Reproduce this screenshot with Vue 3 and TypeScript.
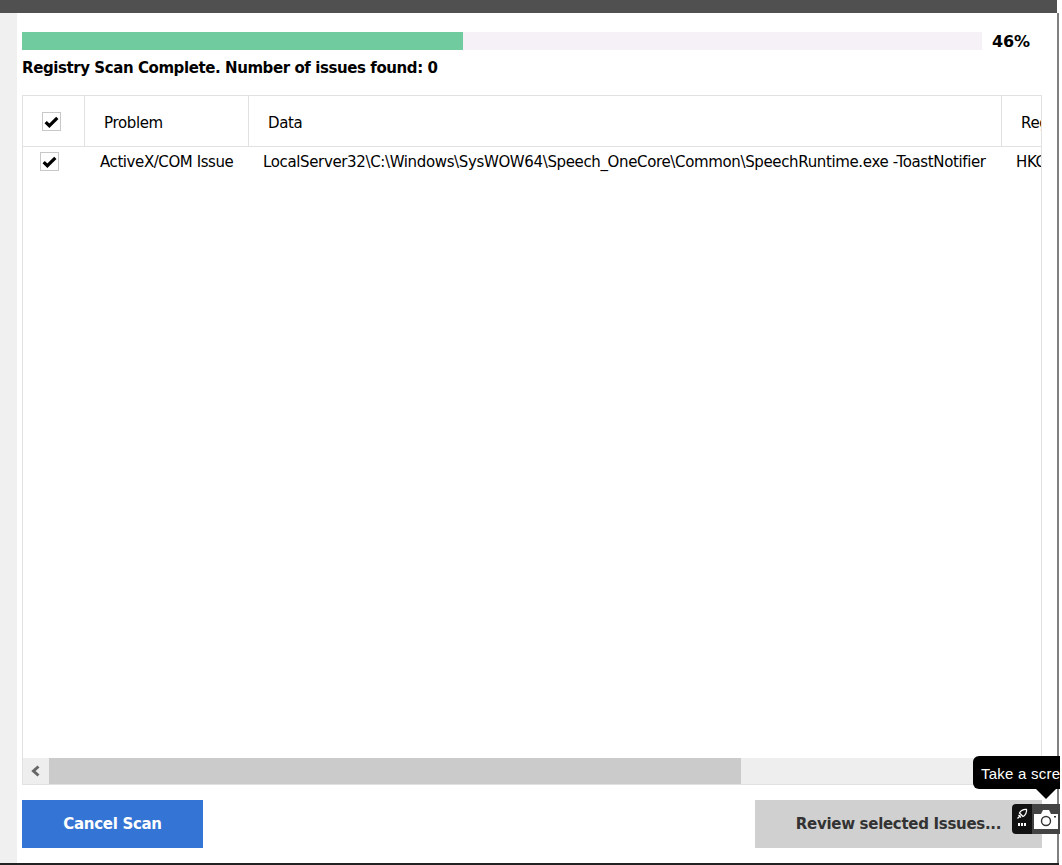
<script setup lang="ts">
const progress = 45.94
</script>

<template>
  <div class="window">
    <div class="frame">
      <div class="topbar"></div>
      <div class="body">
        <div class="rail"></div>
        <main class="content">
          <div class="progress-row">
            <div class="track"><div class="fill" :style="{ width: progress + '%' }"></div></div>
            <b class="pct">{{ Math.round(progress) }}%</b>
          </div>
          <p class="status">Registry Scan Complete. Number of issues found: 0</p>
          <div class="table">
            <div class="table-view">
              <div class="row head">
                <div class="cell c1"><span class="cb"><svg viewBox="0 0 16 16"><path d="M2.5 8.5 L6 12 L13.5 4.5" /></svg></span></div>
                <div class="cell c2 label">Problem</div>
                <div class="cell c3 label">Data</div>
                <div class="cell c4 label">Registry Key</div>
              </div>
              <div class="row item">
                <div class="ic1"><span class="cb"><svg viewBox="0 0 16 16"><path d="M2.5 8.5 L6 12 L13.5 4.5" /></svg></span></div>
                <div class="ic2">ActiveX/COM Issue</div>
                <div class="ic3">LocalServer32\C:\Windows\SysWOW64\Speech_OneCore\Common\SpeechRuntime.exe -ToastNotifier</div>
                <div class="ic4">HKCR\CLSID</div>
              </div>
            </div>
            <div class="scrollbar">
              <div class="arrow"><svg viewBox="0 0 12 12" width="12" height="12"><path d="M8.5 1.5 L3.5 6 L8.5 10.5" /></svg></div>
              <div class="thumb"></div>
            </div>
          </div>
          <div class="actions">
            <button class="btn primary">Cancel Scan</button>
            <button class="btn disabled">Review selected Issues...</button>
          </div>
          <div class="shot">
            <div class="tip">Take a screenshot</div>
            <div class="tip-arrow"></div>
            <div class="toolbar">
              <div class="tool-left">
                <svg viewBox="0 0 12 12" width="12" height="12"><path d="M1.5 10.5 L4.5 7.5 M3.5 5 C4.5 2.5 8 1 10.5 1.5 C11 4 9.5 7.5 7 8.5 Z M2.5 7 L5 9.5" /></svg>
                <span class="dots"><i></i><i></i><i></i></span>
              </div>
              <div class="tool-cam">
                <svg viewBox="0 0 24 19" width="24" height="19"><path class="cam" d="M0 4 H7 L9 0 H15 L17 4 H24 V19 H0 Z" /><circle cx="12" cy="11" r="4.5" class="lens" /><rect x="20" y="6" width="2" height="1.5" fill="#333" /></svg>
              </div>
            </div>
          </div>
        </main>
      </div>
    </div>
  </div>
</template>

<style>
html, body { margin: 0; background: #fff; }
</style>

<style scoped>
.window {
  width: 1062px; height: 865px; overflow: hidden; background: #fff;
  font-family: "DejaVu Sans", sans-serif; color: #000;
}
.frame {
  width: 1059px; height: 865px; box-sizing: border-box;
  display: flex; flex-direction: column;
  border-bottom: 2px solid #222;
}
.topbar { height: 13px; flex: none; background: #505050; margin-right: 2px; }
.body { flex: 1; display: flex; min-height: 0; }
.rail { width: 17px; flex: none; background: #f0f0f0; }
.content {
  position: relative; flex: 1; box-sizing: border-box;
  padding: 19px 0 0 5px; border-right: 2px solid #808080;
  display: flex; flex-direction: column;
}
.progress-row { display: flex; align-items: center; height: 18px; }
.track { width: 960px; height: 18px; background: #f6f1f6; flex: none; }
.fill { height: 100%; background: #70cc9f; }
.pct { margin-left: 10px; font-size: 16px; letter-spacing: -.1px; }
.status { margin: 9px 0 0; font-size: 15px; line-height: 18px; font-weight: 700; letter-spacing: -.42px; }
.table {
  margin-top: 18px; width: 1020px; height: 690px; box-sizing: border-box;
  border: 1px solid #e1e1e1; display: flex; flex-direction: column; overflow: hidden;
}
.table-view { flex: 1; min-height: 0; overflow: hidden; }
.row { display: flex; width: 1200px; font-size: 15px; letter-spacing: -.36px; }
.head { height: 51px; border-bottom: 1px solid #e1e1e1; box-sizing: border-box; }
.cell { border-right: 1px solid #e1e1e1; box-sizing: border-box; display: flex; align-items: center; padding-left: 19px; }
.label { padding-top: 3px; }
.c1 { width: 62px; }
.c2 { width: 164px; }
.c3 { width: 753px; }
.c4 { flex: 1; border-right: 0; }
.item { height: 30px; align-items: center; }
.ic1 { width: 62px; padding-left: 17px; box-sizing: border-box; flex: none; display: flex; margin-top: -1px; }
.ic2 { width: 164px; padding-left: 15px; box-sizing: border-box; flex: none; letter-spacing: -.42px; }
.ic3 { width: 753px; padding-left: 14px; box-sizing: border-box; flex: none; white-space: nowrap; }
.ic4 { padding-left: 14px; white-space: nowrap; }
.cb {
  width: 19px; height: 19px; box-sizing: border-box; border: 1px solid #c8c8c8;
  display: block; background: #fff;
}
.cb svg { display: block; width: 17px; height: 17px; }
.cb path { fill: none; stroke: #000; stroke-width: 3; }
.scrollbar { height: 26px; flex: none; background: #eee; display: flex; }
.arrow { width: 26px; flex: none; display: flex; align-items: center; justify-content: center; }
.arrow path { fill: none; stroke: #666; stroke-width: 3; }
.thumb { width: 692px; background: #cbcbcb; }
.actions { display: flex; justify-content: space-between; width: 1020px; margin-top: 15px; }
.btn {
  border: 0; height: 48px; font-family: inherit; font-size: 15px; font-weight: 700; padding: 0; letter-spacing: -.3px;
}
.primary { width: 181px; background: #3474d4; color: #fff; }
.disabled { width: 287px; background: #d0d0d0; color: #333; }
.shot { position: absolute; left: 956px; top: 743px; width: 87px; height: 78px; overflow: hidden; }
.tip {
  position: absolute; left: 0; top: 0; width: 120px; height: 33px; box-sizing: border-box;
  background: #000; border-radius: 6px; color: #fff; padding: 9px 8px;
  font: 15px/17px "Liberation Sans", sans-serif; letter-spacing: .25px; white-space: nowrap;
}
.tip-arrow {
  position: absolute; left: 63px; top: 33px; width: 0; height: 0;
  border: 10px solid transparent; border-bottom: 0; border-top-color: #000;
}
.toolbar {
  position: absolute; left: 39px; top: 48px; width: 48px; height: 30px;
  background: #111; border-radius: 4px 0 0 4px; display: flex;
}
.tool-left { width: 20px; display: flex; flex-direction: column; align-items: center; padding-top: 4px; gap: 3px; box-sizing: border-box; }
.tool-left path { fill: none; stroke: #fff; stroke-width: 1.3; }
.dots { display: flex; gap: 1px; }
.dots i { width: 2px; height: 3px; background: #fff; display: block; }
.tool-cam { flex: 1; background: #444; display: flex; align-items: center; justify-content: center; }
.cam { fill: #fff; }
.lens { fill: #fff; stroke: #333; stroke-width: 1.4; }
</style>
